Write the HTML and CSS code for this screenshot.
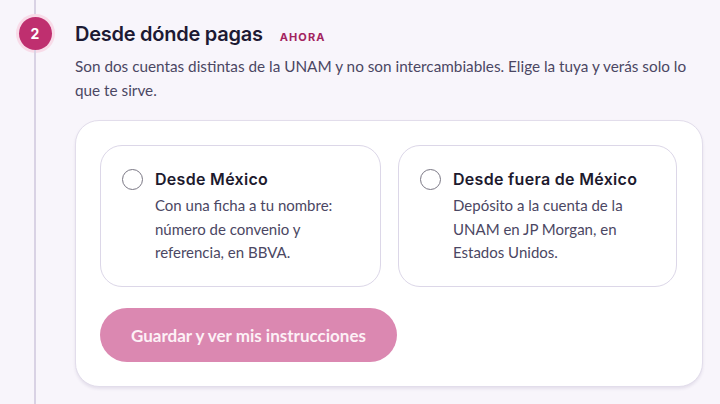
FILE: index.html
```html
<!DOCTYPE html>
<html lang="es">
<head>
<meta charset="utf-8">
<link rel="stylesheet" href="styles.css">
</head>
<body>
<div class="step">
  <div class="rail">
    <div class="line line-top"></div>
    <div class="badge">2</div>
    <div class="line line-bottom"></div>
  </div>
  <div class="content">
    <div class="head">
      <h2 class="title">Desde dónde pagas</h2>
      <span class="tag">AHORA</span>
    </div>
    <p class="desc">Son dos cuentas distintas de la UNAM y no son intercambiables. Elige la tuya y verás solo lo que te sirve.</p>
    <div class="card">
      <div class="options">
        <label class="option">
          <span class="radio"></span>
          <span class="opt-text">
            <span class="opt-title">Desde México</span>
            <span class="opt-desc">Con una ficha a tu nombre: número de convenio y referencia, en BBVA.</span>
          </span>
        </label>
        <label class="option">
          <span class="radio"></span>
          <span class="opt-text">
            <span class="opt-title">Desde fuera de México</span>
            <span class="opt-desc">Depósito a la cuenta de la UNAM en JP Morgan, en Estados Unidos.</span>
          </span>
        </label>
      </div>
      <button class="btn" disabled>Guardar y ver mis instrucciones</button>
    </div>
  </div>
</div>
</body>
</html>
```

FILE: styles.css
```css
* { box-sizing: border-box; }
html, body { margin: 0; padding: 0; }
body {
  background: #f8f5fb;
  font-family: Lato, "Noto Sans", sans-serif;
  width: 720px;
  height: 404px;
  overflow: hidden;
}
.step {
  display: flex;
  height: 404px;
}
.rail {
  width: 70px;
  flex: none;
  display: flex;
  flex-direction: column;
  align-items: center;
}
.line {
  width: 2px;
  background: #d9d2e4;
}
.line-top { height: 17px; }
.line-bottom { flex: 1; }
.badge {
  width: 33px;
  height: 33px;
  border-radius: 50%;
  background: #bf2f6f;
  box-shadow: 0 0 0 3px #f8dbe8;
  color: #fff;
  font-family: Inter, sans-serif;
  font-weight: 700;
  font-size: 14px;
  display: flex;
  align-items: center;
  justify-content: center;
  flex: none;
}
.content {
  margin-left: 5px;
  width: 628px;
  padding-top: 20px;
}
.head {
  display: flex;
  align-items: baseline;
  gap: 17px;
  height: 28px;
}
.title {
  margin: 0;
  font-family: Inter, sans-serif;
  font-weight: 600;
  font-size: 20px;
  line-height: 28px;
  letter-spacing: -0.25px;
  color: #1d1a33;
}
.tag {
  font-family: Inter, sans-serif;
  font-weight: 700;
  font-size: 11px;
  letter-spacing: 1.1px;
  color: #a3245f;
}
.desc {
  margin: 6px 0 0;
  font-size: 15.3px;
  line-height: 24px;
  color: #4b4763;
}
.card {
  margin-top: 18px;
  background: #fff;
  border: 1px solid #e2ddeb;
  border-radius: 24px;
  box-shadow: 0 2px 3px rgba(70, 50, 110, 0.1);
  padding: 24px 24px 24px;
}
.options {
  display: grid;
  grid-template-columns: 281px 279px;
  gap: 17px;
}
.option {
  display: flex;
  align-items: flex-start;
  gap: 12px;
  height: 142px;
  border: 1px solid #dcd7e8;
  border-radius: 22px;
  padding: 22px 20px 0 21px;
}
.radio {
  width: 21px;
  height: 21px;
  border: 1.5px solid #7a7784;
  border-radius: 50%;
  flex: none;
  margin-top: 1px;
}
.opt-text {
  display: flex;
  flex-direction: column;
}
.opt-title {
  font-family: Inter, sans-serif;
  font-weight: 600;
  font-size: 16px;
  line-height: 22px;
  letter-spacing: 0.3px;
  color: #1d1a2e;
}
.opt-desc {
  margin-top: 4px;
  font-size: 15px;
  line-height: 23.5px;
  color: #4b4763;
}
.btn {
  margin-top: 21px;
  width: 297px;
  height: 54px;
  border: none;
  border-radius: 27px;
  background: #db88b1;
  color: #fdf1f6;
  font-family: Lato, sans-serif;
  font-weight: 700;
  font-size: 17px;
  display: block;
}
```
